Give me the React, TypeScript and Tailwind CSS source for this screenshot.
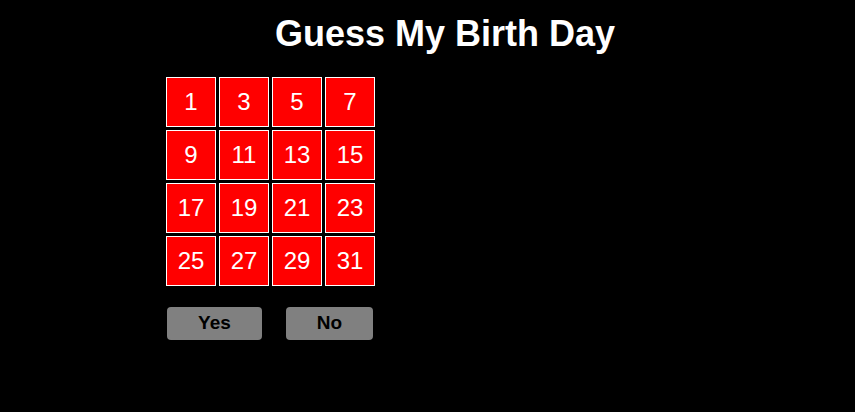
const numbers = [1, 3, 5, 7, 9, 11, 13, 15, 17, 19, 21, 23, 25, 27, 29, 31];

export default function App() {
  return (
    <div
      className="min-h-[412px] w-full bg-black text-white"
      style={{ fontFamily: '"Liberation Sans", Arial, sans-serif' }}
    >
      <h1 className="pl-[35px] pt-[14px] text-center text-[36px] font-bold leading-[40px]">
        Guess My Birth Day
      </h1>
      <div className="ml-[166px] mt-[23px] grid w-max grid-cols-[repeat(4,50px)] gap-[3px]">
        {numbers.map((n) => (
          <div
            key={n}
            className="flex h-[50px] w-[50px] items-center justify-center border border-white bg-[#ff0000] text-[24px]"
          >
            {n}
          </div>
        ))}
      </div>
      <div className="ml-[167px] mt-[21px] flex gap-[24px]">
        <button className="h-[33px] w-[95px] rounded-[4px] bg-[#808080] text-[19px] font-bold text-black">
          Yes
        </button>
        <button className="h-[33px] w-[87px] rounded-[4px] bg-[#808080] text-[19px] font-bold text-black">
          No
        </button>
      </div>
    </div>
  );
}
